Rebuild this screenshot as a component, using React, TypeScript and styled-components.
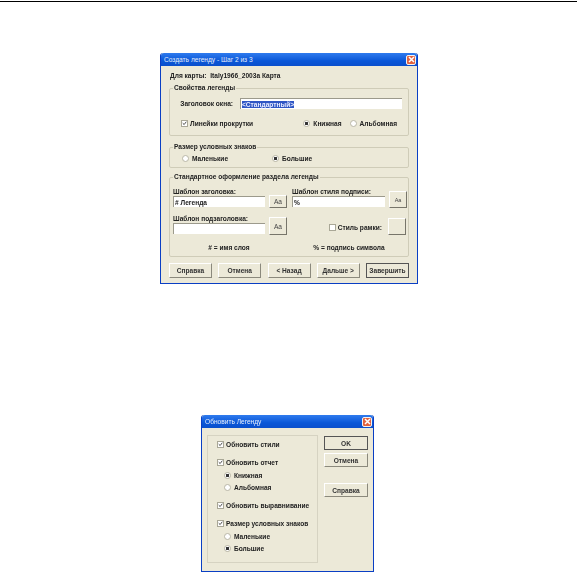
import React from "react";
import styled, { createGlobalStyle } from "styled-components";

const Global = createGlobalStyle`
  html, body { margin: 0; padding: 0; background: #fff; }
  body { width: 577px; height: 572px; overflow: hidden; font-family: "Liberation Sans", Arial, sans-serif; }
`;

const Check = ({ on }: { on?: boolean }) => (
  <CheckBox>
    {on && (
      <svg width="7" height="7" viewBox="0 0 7 7">
        <path d="M1 3l2 2 3-4" fill="none" stroke="#333" strokeWidth="1.2" />
      </svg>
    )}
  </CheckBox>
);

const Option = ({ label, on }: { label: string; on?: boolean }) => (
  <Choice>
    <RadioDot $on={on} />
    {label}
  </Choice>
);

const Tick = ({ label, on = true }: { label: string; on?: boolean }) => (
  <Choice>
    <Check on={on} />
    {label}
  </Choice>
);

const Titlebar = ({ title }: { title: string }) => (
  <TitleBar>
    <span>{title}</span>
    <CloseBtn>
      <svg width="7" height="7" viewBox="0 0 7 7">
        <path d="M1 1l5 5M6 1l-5 5" stroke="#fff" strokeWidth="1.5" />
      </svg>
    </CloseBtn>
  </TitleBar>
);

const App = () => {
  return (
    <Page>
      <Global />
      <TopRule />
      <LegendDialog>
        <Titlebar title="Создать легенду - Шаг 2 из 3" />
        <LegendBody>
          <MapLine>Для карты:&nbsp; Italy1966_2003a Карта</MapLine>
          <Group $h={52} $after={7}>
            <Legend>Свойства легенды</Legend>
            <TitleRow>
              <span>Заголовок окна:</span>
              <Input $w={162}>
                <Selected>&lt;Стандартный&gt;</Selected>
              </Input>
            </TitleRow>
            <ScrollRow>
              <Tick label="Линейки прокрутки" />
              <RadioPair>
                <Option label="Книжная" on />
                <Option label="Альбомная" />
              </RadioPair>
            </ScrollRow>
          </Group>
          <Group $h={25} $after={5}>
            <Legend>Размер условных знаков</Legend>
            <SizeRow>
              <Option label="Маленькие" />
              <Option label="Большие" on />
            </SizeRow>
          </Group>
          <Group $h={84} $after={6}>
            <Legend>Стандартное оформление раздела легенды</Legend>
            <TemplateGrid>
              <Field>
                <FieldStack>
                  <span>Шаблон заголовка:</span>
                  <Input $w={92}># Легенда</Input>
                </FieldStack>
                <FontBtn $h={13}>Aa</FontBtn>
              </Field>
              <Field>
                <FieldStack>
                  <span>Шаблон стиля подписи:</span>
                  <Input $w={93}>%</Input>
                </FieldStack>
                <FontBtn $h={17} $small>Aa</FontBtn>
              </Field>
              <Field>
                <FieldStack>
                  <span>Шаблон подзаголовка:</span>
                  <Input $w={92} />
                </FieldStack>
                <FontBtn $h={18}>Aa</FontBtn>
              </Field>
              <FrameRow>
                <FrameLabel>
                  <Tick label="Стиль рамки:" on={false} />
                </FrameLabel>
                <FontBtn $h={17} />
              </FrameRow>
              <Hint $shift={7}># = имя слоя</Hint>
              <Hint>% = подпись символа</Hint>
            </TemplateGrid>
          </Group>
          <ButtonRow>
            <Btn>Справка</Btn>
            <Btn>Отмена</Btn>
            <Btn>&lt; Назад</Btn>
            <Btn>Дальше &gt;</Btn>
            <Btn $primary>Завершить</Btn>
          </ButtonRow>
        </LegendBody>
      </LegendDialog>

      <UpdateDialog>
        <Titlebar title="Обновить Легенду" />
        <UpdateBody>
          <OptionsPanel>
            <Tick label="Обновить стили" />
            <TickBlock>
              <Tick label="Обновить отчет" />
              <Nested>
                <Option label="Книжная" on />
                <Option label="Альбомная" />
              </Nested>
            </TickBlock>
            <Tick label="Обновить выравнивание" />
            <TickBlock>
              <Tick label="Размер условных знаков" />
              <Nested>
                <Option label="Маленькие" />
                <Option label="Большие" on />
              </Nested>
            </TickBlock>
          </OptionsPanel>
          <SideButtons>
            <Btn $primary $w={44} $h={14}>OK</Btn>
            <Btn $w={44} $h={14}>Отмена</Btn>
            <HelpGap />
            <Btn $w={44} $h={14}>Справка</Btn>
          </SideButtons>
        </UpdateBody>
      </UpdateDialog>
    </Page>
  );
};

export default App;

const Page = styled.div`
  display: flex;
  flex-direction: column;
  align-items: flex-start;
  width: 577px;
  height: 572px;
  padding-top: 1px;
  box-sizing: border-box;
`;

const TopRule = styled.div`
  width: 100%;
  height: 1px;
  background: #000;
`;

const Dialog = styled.div`
  display: flex;
  flex-direction: column;
  box-sizing: border-box;
  background: #ece9d8;
  border: 1px solid #0a3fc4;
  border-top: 0;
  border-radius: 3px 3px 0 0;
  color: #222;
  font-size: 6.6px;
  font-weight: 700;
  filter: blur(0.45px);
`;

const LegendDialog = styled(Dialog)`
  width: 258px;
  height: 231px;
  margin: 51px 0 0 160px;
`;

const UpdateDialog = styled(Dialog)`
  width: 173px;
  height: 157px;
  margin: 131px 0 0 201px;
`;

const TitleBar = styled.div`
  display: flex;
  align-items: center;
  justify-content: space-between;
  flex: none;
  height: 13px;
  padding: 0 1px 0 3px;
  background: linear-gradient(#2f7bee, #0a57d8 60%, #0a4fcc);
  border-radius: 3px 3px 0 0;
  color: #e6eefc;
  font-weight: 400;
`;

const CloseBtn = styled.div`
  display: flex;
  align-items: center;
  justify-content: center;
  width: 10px;
  height: 10px;
  background: #e2623e;
  border: 1px solid #f2f2f2;
  box-sizing: border-box;
  border-radius: 2px;
`;

const LegendBody = styled.div`
  display: flex;
  flex-direction: column;
  padding: 3px 8px 0 8px;
`;

const MapLine = styled.div`
  height: 13px;
  line-height: 13px;
  padding-left: 1px;
  margin-bottom: 2px;
`;

const Group = styled.fieldset<{ $h: number; $after: number }>`
  margin: 0 0 ${(p) => p.$after}px;
  padding: 0 2px 0 3px;
  height: ${(p) => p.$h}px;
  box-sizing: border-box;
  border: 1px solid #cfccb8;
  border-radius: 2px;
  min-width: 0;
`;

const Legend = styled.legend`
  padding: 0 1px;
  line-height: 8px;
`;

const TitleRow = styled.div`
  display: flex;
  align-items: center;
  justify-content: flex-end;
  gap: 7px;
  margin-top: 6px;
  padding-right: 4px;
`;

const Input = styled.div<{ $w: number }>`
  display: flex;
  align-items: center;
  width: ${(p) => p.$w}px;
  height: 11px;
  flex: none;
  box-sizing: border-box;
  padding-left: 1px;
  background: #fff;
  border-top: 1px solid #9c9a8c;
  border-left: 1px solid #9c9a8c;
`;

const Selected = styled.span`
  background: #2f56c4;
  color: #e8ecff;
`;

const Choice = styled.div`
  display: flex;
  align-items: center;
  gap: 2px;
  height: 9px;
  white-space: nowrap;
`;

const CheckBox = styled.span`
  display: inline-flex;
  align-items: center;
  justify-content: center;
  width: 7px;
  height: 7px;
  flex: none;
  box-sizing: border-box;
  background: #fff;
  border: 1px solid #a9a796;
`;

const RadioDot = styled.span<{ $on?: boolean }>`
  display: inline-block;
  width: 7px;
  height: 7px;
  flex: none;
  box-sizing: border-box;
  border-radius: 50%;
  background: ${(p) => (p.$on ? "radial-gradient(circle, #333 0 1.4px, #fff 1.8px)" : "#fff")};
  border: 1px solid #b8b6a6;
  margin-right: 1px;
`;

const ScrollRow = styled.div`
  display: flex;
  align-items: center;
  justify-content: space-between;
  margin-top: 10px;
  padding: 0 9px 0 8px;
`;

const RadioPair = styled.div`
  display: flex;
  gap: 8px;
`;

const SizeRow = styled.div`
  display: flex;
  gap: 44px;
  padding: 3px 0 0 9px;
`;

const TemplateGrid = styled.div`
  display: grid;
  grid-template-columns: 119px 114px;
  row-gap: 7px;
  margin-top: 6px;
`;

const Field = styled.div`
  display: flex;
  align-items: flex-end;
  gap: 4px;
  height: 20px;
`;

const FieldStack = styled.div`
  display: flex;
  flex-direction: column;
  line-height: 9px;
  white-space: nowrap;
`;

const FontBtn = styled.div<{ $h: number; $small?: boolean }>`
  display: flex;
  align-items: center;
  justify-content: center;
  width: 18px;
  height: ${(p) => p.$h}px;
  flex: none;
  box-sizing: border-box;
  margin-bottom: -1px;
  font-weight: 400;
  font-size: ${(p) => (p.$small ? "5.5px" : "6.6px")};
  color: #444;
  background: #ece9d8;
  border-right: 1px solid #77756a;
  border-bottom: 1px solid #77756a;
  border-top: 1px solid #fff;
  border-left: 1px solid #fff;
`;

const FrameRow = styled.div`
  display: flex;
  align-items: flex-end;
  justify-content: flex-end;
  gap: 6px;
  height: 20px;
`;

const FrameLabel = styled.div`
  margin-bottom: 2px;
`;

const Hint = styled.div<{ $shift?: number }>`
  text-align: center;
  height: 10px;
  line-height: 10px;
  margin-top: 2px;
  padding-right: ${(p) => p.$shift ?? 0}px;
`;

const ButtonRow = styled.div`
  display: flex;
  justify-content: space-between;
`;

const Btn = styled.div<{ $primary?: boolean; $w?: number; $h?: number }>`
  display: flex;
  align-items: center;
  justify-content: center;
  width: ${(p) => p.$w ?? 43}px;
  height: ${(p) => p.$h ?? 15}px;
  box-sizing: border-box;
  background: #ece9d8;
  border-top: 1px solid #fff;
  border-left: 1px solid #fff;
  border-right: 1px solid ${(p) => (p.$primary ? "#333" : "#8b897c")};
  border-bottom: 1px solid ${(p) => (p.$primary ? "#333" : "#8b897c")};
  outline: ${(p) => (p.$primary ? "1px solid #555" : "none")};
  outline-offset: -1px;
  color: #333;
`;

const UpdateBody = styled.div`
  display: flex;
  gap: 6px;
  padding: 7px 5px 8px 5px;
  flex: 1;
  min-height: 0;
`;

const OptionsPanel = styled.div`
  display: flex;
  flex-direction: column;
  gap: 9px;
  width: 111px;
  box-sizing: border-box;
  padding: 4px 0 0 9px;
  border: 1px solid #d6d3c2;
`;

const TickBlock = styled.div`
  display: flex;
  flex-direction: column;
`;

const Nested = styled.div`
  display: flex;
  flex-direction: column;
  gap: 3px;
  padding: 4px 0 0 7px;
`;

const SideButtons = styled.div`
  display: flex;
  flex-direction: column;
  gap: 3px;
  padding-top: 1px;
`;

const HelpGap = styled.div`
  height: 10px;
`;
